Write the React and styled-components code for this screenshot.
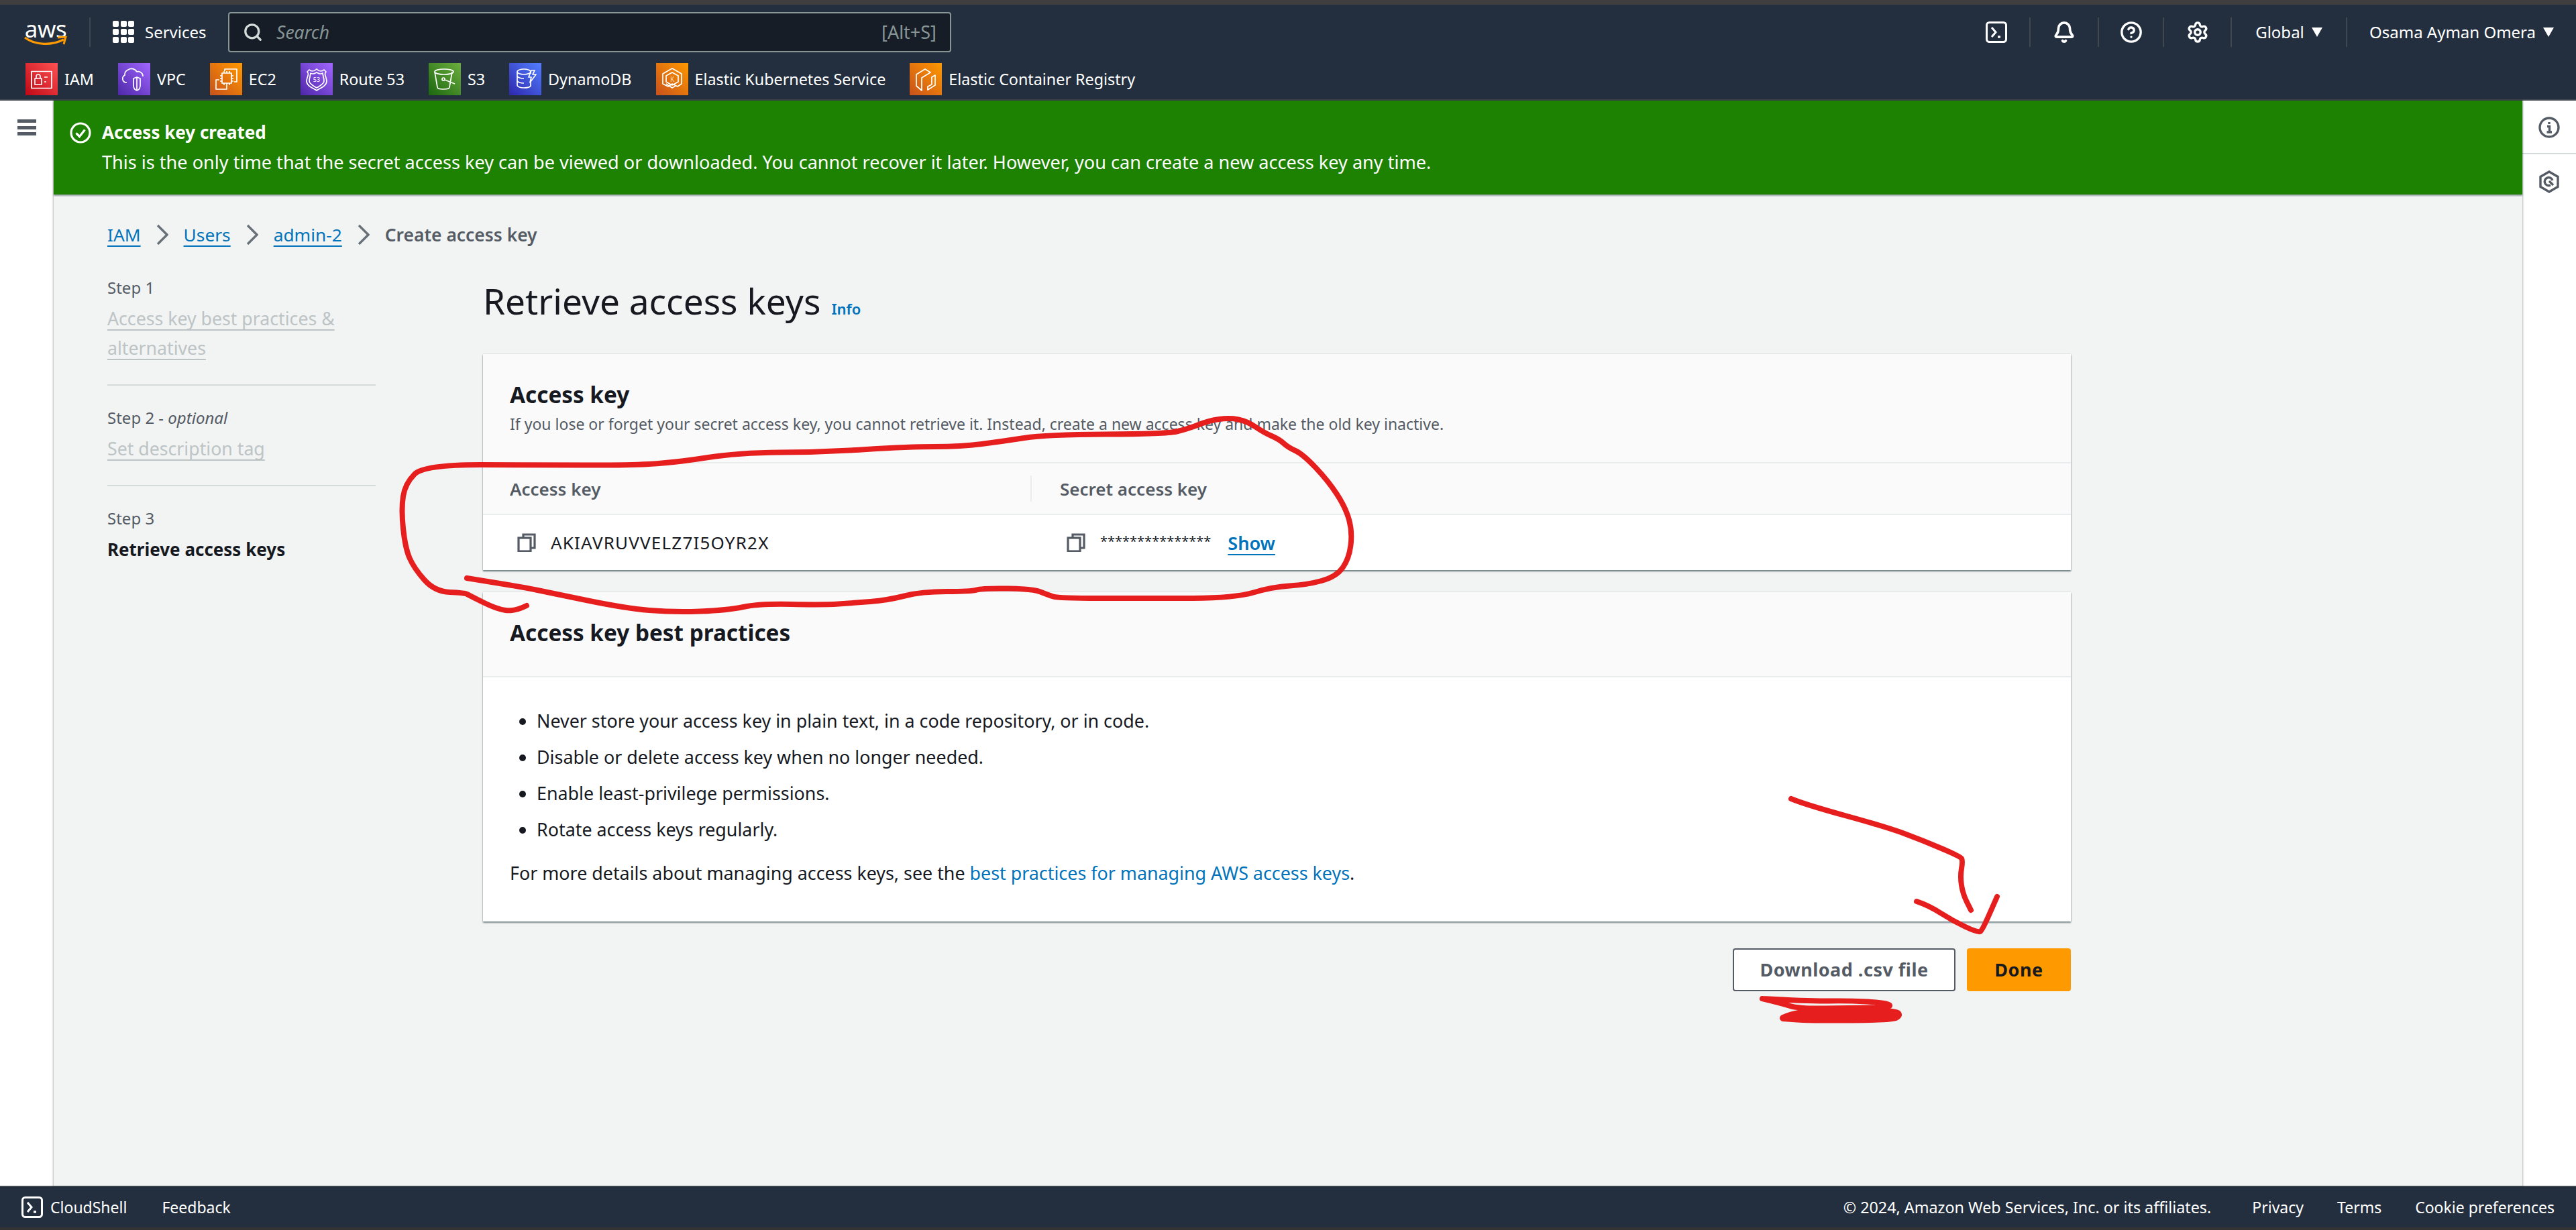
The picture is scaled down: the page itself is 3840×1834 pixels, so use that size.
import styled, { createGlobalStyle } from "styled-components";
import { Bell, CircleHelp, Search, Settings } from "lucide-react";

const GlobalStyle = createGlobalStyle`
  html, body {
    margin: 0;
    padding: 0;
    height: 100%;
    overflow: hidden;
    font-family: "Noto Sans", "Open Sans", sans-serif;
    font-size: 26.85px;
    color: #16191f;
  }
  * { box-sizing: border-box; }
`;

const favorites = [
  { name: "IAM", kind: "iam" },
  { name: "VPC", kind: "vpc" },
  { name: "EC2", kind: "ec2" },
  { name: "Route 53", kind: "route" },
  { name: "S3", kind: "s3" },
  { name: "DynamoDB", kind: "dynamo" },
  { name: "Elastic Kubernetes Service", kind: "eks" },
  { name: "Elastic Container Registry", kind: "ecr" },
];

const gradients = {
  iam: ["#bd0816", "#ff5252"],
  vpc: ["#4d27a8", "#a166ff"],
  ec2: ["#c8511b", "#ff9900"],
  route: ["#4d27a8", "#a166ff"],
  s3: ["#1b660f", "#6cae3e"],
  dynamo: ["#2e27ad", "#527fff"],
  eks: ["#c8511b", "#ff9900"],
  ecr: ["#c8511b", "#ff9900"],
};

function ServiceGlyph({ kind }) {
  if (kind === "iam") {
    return (
      <>
        <rect x="9" y="12.5" width="30" height="25" />
        <rect x="14" y="23" width="10" height="9" />
        <path d="M16 23v-3a3 3 0 0 1 6 0v3M28 21h5M28 28h3" />
      </>
    );
  }
  if (kind === "vpc") {
    return (
      <>
        <path d="M13 29h-2a6 6 0 0 1-1-11 8 8 0 0 1 5-8 9 9 0 0 1 13 3 7 7 0 0 1 9 7" />
        <path d="M28 21l-5 2v10c0 4 2 7 5 8 3-1 5-4 5-8V23zM28 21v20" />
      </>
    );
  }
  if (kind === "ec2") {
    return (
      <>
        <path d="M22 12V9h18v19h-4M14 25H9v14h16v-6" />
        <rect x="18" y="15" width="14" height="15" />
        <path d="M21 15v-3M25 15v-3M29 15v-3M21 33v-3M25 33v-3M29 33v-3M15 19h3M15 23h3M15 27h3M32 19h3M32 23h3M32 27h3" />
      </>
    );
  }
  if (kind === "route") {
    return (
      <>
        <path d="M24 9c2 2 4 3 6 3 2 0 4-1 5-2l3 3c-1 1-2 3-1 6 1 3 2 5 2 8 0 7-9 10-15 14C18 37 9 34 9 27c0-3 1-5 2-8 1-3 0-5-1-6l3-3c1 1 3 2 5 2 2 0 4-1 6-3z" />
        <path d="M24 14c2 1 3 2 5 2 1 0 3 0 4-1 0 2 1 4 1 6 1 2 1 4 1 6 0 4-6 7-11 10-5-3-11-6-11-10 0-2 0-4 1-6 0-2 1-4 1-6 1 1 3 1 4 1 2 0 3-1 5-2z" />
        <text x="24" y="28" textAnchor="middle" fontSize="9" fill="#fff" stroke="none">53</text>
      </>
    );
  }
  if (kind === "s3") {
    return (
      <>
        <ellipse cx="23" cy="13" rx="14" ry="4" />
        <path d="M9 13l4 23c0 2 4 3 9 3s9-1 9-3l4-23" />
        <circle cx="22" cy="24" r="2" />
        <path d="M24 25l15 6" />
      </>
    );
  }
  if (kind === "dynamo") {
    return (
      <>
        <ellipse cx="22" cy="13" rx="10" ry="4" />
        <path d="M12 13v6c0 2 4 4 10 4M12 19v7c0 2 4 4 10 4M12 26v7c0 2 4 4 10 4 5 0 9-1 10-3V25M32 13v3" />
        <path d="M33 11l-4 10h4l-2 8 9-12h-5l3-6z" />
      </>
    );
  }
  if (kind === "eks") {
    return (
      <>
        <path d="M24 8l14 8v15l-6 4-8-4-6 4-8-4V16z" />
        <path d="M24 14l9 5v9l-9 5-9-5v-9zM15 31l9 6 5-3" />
        <text x="24" y="28" textAnchor="middle" fontSize="10" fill="#ffd9b0" stroke="none">K</text>
      </>
    );
  }
  return (
    <>
      <path d="M10 17l13-8 8 5-13 8v19l-8-7zM18 22v19" />
      <path d="M27 40l11-7V18l-5 3v11l-6 3z" />
    </>
  );
}

function ServiceIcon({ kind }) {
  const [from, to] = gradients[kind];
  return (
    <svg width="48" height="48" viewBox="0 0 48 48">
      <defs>
        <linearGradient id={`g-${kind}`} x1="0" y1="1" x2="1" y2="0">
          <stop offset="0" stopColor={from} />
          <stop offset="1" stopColor={to} />
        </linearGradient>
      </defs>
      <rect width="48" height="48" fill={`url(#g-${kind})`} />
      <g fill="none" stroke="#fff" strokeWidth="1.7" strokeLinejoin="round">
        <ServiceGlyph kind={kind} />
      </g>
    </svg>
  );
}

function TerminalIcon({ size = 32 }) {
  return (
    <svg width={size} height={size} viewBox="0 0 32 32" fill="none" stroke="#fff" strokeWidth="3">
      <rect x="1.5" y="1.5" width="29" height="29" rx="4" />
      <path d="M9 9l6 7-6 7" />
      <path d="M18 23h4" strokeWidth="3.4" />
    </svg>
  );
}

function CopyIcon() {
  return (
    <svg width="28" height="28" viewBox="0 0 28 28" fill="none" stroke="#545b64" strokeWidth="3.2">
      <path d="M9 6V2h17v20h-6" />
      <rect x="2" y="7" width="18" height="20" />
    </svg>
  );
}

function CrumbChevron() {
  return (
    <svg width="18" height="30" viewBox="0 0 18 30" fill="none" stroke="#687078" strokeWidth="3.4">
      <path d="M2 1l14 14L2 29" />
    </svg>
  );
}

// joins the traced points with soft curves, like a marker stroke
function smooth(points) {
  let d = `M${points[0][0]} ${points[0][1]}`;
  for (let i = 1; i < points.length - 1; i++) {
    const mx = (points[i][0] + points[i + 1][0]) / 2;
    const my = (points[i][1] + points[i + 1][1]) / 2;
    d += ` Q${points[i][0]} ${points[i][1]} ${mx} ${my}`;
  }
  const last = points[points.length - 1];
  return `${d} L${last[0]} ${last[1]}`;
}

const loop = [
  [785, 903], [767, 912], [740, 908], [700, 888], [693, 884], [648, 882], [617, 847], [604, 817], [598, 759], [604, 721],
  [632, 693], [800, 693], [929, 694], [1005, 690], [1100, 675], [1228, 674], [1355, 666], [1432, 666], [1495, 658],
  [1559, 648], [1738, 647], [1770, 640], [1802, 627], [1833, 623], [1859, 628], [1884, 645], [1907, 655], [1920, 667],
  [1942, 677], [1980, 717], [2006, 757], [2016, 793], [2011, 833], [1992, 860], [1948, 872], [1897, 875], [1840, 892],
  [1700, 892], [1578, 892], [1562, 887], [1540, 878], [1464, 877], [1448, 882], [1374, 882], [1323, 895], [1272, 899],
  [1228, 902], [1132, 900], [1084, 910], [1004, 913], [932, 907], [816, 883], [782, 876], [696, 862],
];

const arrowLine = [
  [2670, 1191], [2692, 1200], [2812, 1233], [2866, 1253], [2922, 1277], [2926, 1283], [2922, 1307], [2926, 1333], [2938, 1357],
];

const arrowHead = [
  [2857, 1344], [2875, 1350], [2911, 1373], [2949, 1391], [2955, 1387], [2977, 1337],
];

const scribble = [
  [2627, 1489], [2700, 1493], [2754, 1492], [2812, 1495], [2821, 1502], [2760, 1503], [2681, 1504], [2656, 1496], [2627, 1489],
];

const scribbleFill = [
  [2658, 1518], [2680, 1508], [2760, 1507], [2826, 1508], [2832, 1514], [2820, 1520], [2700, 1521], [2658, 1518],
];

function App() {
  return (
    <>
      <GlobalStyle />
      <Page>
        <TopStrip />
        <Nav>
          <NavRow>
            <Logo>
              <LogoText>aws</LogoText>
              <svg width="64" height="16" viewBox="0 0 64 16">
                <path d="M1 2c16 12 40 12 58 3" fill="none" stroke="#ff9900" strokeWidth="3.4" />
                <path d="M50 2l12-1-3 11" fill="none" stroke="#ff9900" strokeWidth="3" />
              </svg>
            </Logo>
            <NavDivider />
            <ServicesButton>
              <GridDots>
                {Array.from({ length: 9 }, (_, i) => (
                  <span key={i} />
                ))}
              </GridDots>
              Services
            </ServicesButton>
            <SearchBox>
              <Search size={30} color="#d5dbdb" strokeWidth={2.6} />
              <SearchHint>Search</SearchHint>
              <SearchKeys>[Alt+S]</SearchKeys>
            </SearchBox>
            <NavRight>
              <NavIcon $width={101}>
                <TerminalIcon />
              </NavIcon>
              <NavIcon $width={102}>
                <Bell size={34} color="#fff" strokeWidth={2.6} />
              </NavIcon>
              <NavIcon $width={97}>
                <CircleHelp size={34} color="#fff" strokeWidth={2.4} />
              </NavIcon>
              <NavIcon $width={101}>
                <Settings size={34} color="#fff" strokeWidth={2.4} />
              </NavIcon>
              <NavMenu $width={172}>
                Global <Caret />
              </NavMenu>
              <NavMenu $width={341} $last>
                Osama Ayman Omera <Caret />
              </NavMenu>
            </NavRight>
          </NavRow>
          <FavoritesRow>
            {favorites.map((item) => (
              <Favorite key={item.kind}>
                <ServiceIcon kind={item.kind} />
                {item.name}
              </Favorite>
            ))}
          </FavoritesRow>
        </Nav>

        <Body>
          <LeftRail>
            <Hamburger>
              <span />
              <span />
              <span />
            </Hamburger>
          </LeftRail>

          <Main>
            <Flash>
              <svg width="32" height="32" viewBox="0 0 32 32" fill="none" stroke="#fff" strokeWidth="3.2">
                <circle cx="16" cy="16" r="14" />
                <path d="M9.5 16.5l5 5 8-10" />
              </svg>
              <FlashText>
                <FlashTitle>Access key created</FlashTitle>
                This is the only time that the secret access key can be viewed or downloaded. You cannot recover it
                later. However, you can create a new access key any time.
              </FlashText>
            </Flash>

            <Content>
              <Breadcrumbs>
                <CrumbLink>IAM</CrumbLink>
                <CrumbChevron />
                <CrumbLink>Users</CrumbLink>
                <CrumbChevron />
                <CrumbLink>admin-2</CrumbLink>
                <CrumbChevron />
                <CrumbCurrent>Create access key</CrumbCurrent>
              </Breadcrumbs>

              <Columns>
                <Steps>
                  <Step>
                    <StepLabel>Step 1</StepLabel>
                    <StepLink>
                      <u>Access key best practices &amp;</u>
                      <br />
                      <u>alternatives</u>
                    </StepLink>
                  </Step>
                  <Step>
                    <StepLabel>
                      Step 2 - <em>optional</em>
                    </StepLabel>
                    <StepLink>
                      <u>Set description tag</u>
                    </StepLink>
                  </Step>
                  <Step>
                    <StepLabel>Step 3</StepLabel>
                    <StepCurrent>Retrieve access keys</StepCurrent>
                  </Step>
                </Steps>

                <Wizard>
                  <PageTitle>
                    <h1>Retrieve access keys</h1>
                    <InfoLink>Info</InfoLink>
                  </PageTitle>

                  <Card>
                    <CardHeader $height={163}>
                      <CardTitle>Access key</CardTitle>
                      <CardDescription>
                        If you lose or forget your secret access key, you cannot retrieve it. Instead, create a new
                        access key and make the old key inactive.
                      </CardDescription>
                    </CardHeader>
                    <KeyTable>
                      <KeyHead>Access key</KeyHead>
                      <KeyHead $divided>Secret access key</KeyHead>
                      <KeyCell>
                        <CopyIcon />
                        <AccessKeyId>AKIAVRUVVELZ7I5OYR2X</AccessKeyId>
                      </KeyCell>
                      <KeyCell $second>
                        <CopyIcon />
                        <Stars>***************</Stars>
                        <ShowLink>Show</ShowLink>
                      </KeyCell>
                    </KeyTable>
                  </Card>

                  <Card $gap>
                    <CardHeader $height={127}>
                      <CardTitle>Access key best practices</CardTitle>
                    </CardHeader>
                    <PracticesBody>
                      <Practices>
                        <li>Never store your access key in plain text, in a code repository, or in code.</li>
                        <li>Disable or delete access key when no longer needed.</li>
                        <li>Enable least-privilege permissions.</li>
                        <li>Rotate access keys regularly.</li>
                      </Practices>
                      <MoreDetails>
                        For more details about managing access keys, see the{" "}
                        <a>best practices for managing AWS access keys</a>.
                      </MoreDetails>
                    </PracticesBody>
                  </Card>

                  <Actions>
                    <SecondaryButton>Download .csv file</SecondaryButton>
                    <PrimaryButton>Done</PrimaryButton>
                  </Actions>
                </Wizard>
              </Columns>
            </Content>
          </Main>

          <RightRail>
            <RailButton>
              <svg width="32" height="32" viewBox="0 0 32 32" fill="none" stroke="#545b64" strokeWidth="3.4">
                <circle cx="16" cy="16" r="14" />
                <path d="M16 8v3M13 14.5h3.5v8M12.5 23h7.5" />
              </svg>
            </RailButton>
            <RailButton $last>
              <svg width="32" height="34" viewBox="0 0 32 34" fill="none" stroke="#545b64" strokeWidth="3.4">
                <path d="M16 2l13 7.5v15L16 32 3 24.500V9.500z" />
                <path d="M21 15a6 6 0 1 0-3 7" />
                <path d="M16 16l6 6" />
              </svg>
            </RailButton>
          </RightRail>
        </Body>

        <Footer>
          <FooterLeft>
            <TerminalIcon />
            <span>CloudShell</span>
            <FeedbackLabel>Feedback</FeedbackLabel>
          </FooterLeft>
          <FooterRight>
            <Copyright>© 2024, Amazon Web Services, Inc. or its affiliates.</Copyright>
            <span>Privacy</span>
            <span>Terms</span>
            <span>Cookie preferences</span>
          </FooterRight>
        </Footer>
        <BottomStrip />

        <Annotations viewBox="0 0 3840 1834" fill="none" stroke="#e61e1e" strokeWidth="8" strokeLinecap="round" strokeLinejoin="round">
          <path d={smooth(loop)} />
          <path d={smooth(arrowLine)} />
          <path d={smooth(arrowHead)} />
          <path d={smooth(scribble)} />
          <path d={smooth(scribbleFill)} fill="#e61e1e" strokeWidth="10" />
        </Annotations>
      </Page>
    </>
  );
}

export default App;

const Page = styled.div`
  position: relative;
  height: 100vh;
  display: flex;
  flex-direction: column;
  overflow: hidden;
  background: #fff;
`;

const TopStrip = styled.div`
  height: 7px;
  background: #3f3f3f;
`;

const Nav = styled.header`
  height: 143px;
  background: #232f3e;
  border-bottom: 2px solid #414750;
  color: #fff;
`;

const NavRow = styled.div`
  height: 87px;
  display: flex;
  align-items: center;
  padding: 0 0 6px 36px;
`;

const Logo = styled.div`
  width: 64px;
  height: 44px;
  display: flex;
  flex-direction: column;
  align-items: center;
  svg {
    margin-top: -6px;
  }
`;

const LogoText = styled.span`
  font-size: 35px;
  line-height: 34px;
  letter-spacing: -0.5px;
`;

const NavDivider = styled.div`
  width: 2px;
  height: 44px;
  margin-left: 33px;
  background: #414750;
`;

const ServicesButton = styled.div`
  display: flex;
  align-items: center;
  gap: 16px;
  margin-left: 33px;
  font-size: 24px;
  width: 172px;
`;

const GridDots = styled.div`
  display: grid;
  grid-template-columns: repeat(3, 9px);
  grid-auto-rows: 9px;
  gap: 3px 2.5px;
  span {
    background: #fff;
    border-radius: 2px;
  }
`;

const SearchBox = styled.div`
  width: 1078px;
  height: 60px;
  display: flex;
  align-items: center;
  padding: 0 20px 0 20px;
  background: #161d26;
  border: 2px solid #879596;
  border-radius: 4px;
`;

const SearchHint = styled.span`
  margin-left: 20px;
  color: #879596;
  font-size: 26.5px;
  font-style: italic;
`;

const SearchKeys = styled.span`
  margin-left: auto;
  color: #879596;
  font-size: 27px;
`;

const NavRight = styled.div`
  margin-left: auto;
  display: flex;
  align-items: center;
  height: 44px;
`;

const NavIcon = styled.div`
  width: ${(p) => p.$width}px;
  height: 44px;
  display: flex;
  align-items: center;
  justify-content: center;
  border-right: 2px solid #414750;
`;

const NavMenu = styled.div`
  width: ${(p) => p.$width}px;
  height: 44px;
  display: flex;
  align-items: center;
  justify-content: center;
  gap: 11px;
  font-size: 24px;
  border-right: ${(p) => (p.$last ? "none" : "2px solid #414750")};
  white-space: nowrap;
`;

const Caret = styled.i`
  width: 0;
  height: 0;
  border-left: 8px solid transparent;
  border-right: 8px solid transparent;
  border-top: 14px solid #fff;
`;

const FavoritesRow = styled.div`
  display: flex;
  align-items: center;
  gap: 36px;
  padding-left: 38px;
`;

const Favorite = styled.div`
  display: flex;
  align-items: center;
  gap: 10px;
  font-size: 23.3px;
  white-space: nowrap;
`;

const Body = styled.div`
  flex: 1;
  min-height: 0;
  display: flex;
`;

const LeftRail = styled.aside`
  width: 80px;
  background: #fff;
`;

const Hamburger = styled.div`
  margin: 28px 0 0 26px;
  width: 28px;
  height: 24px;
  display: flex;
  flex-direction: column;
  justify-content: space-between;
  span {
    height: 5px;
    background: #545b64;
  }
`;

const Main = styled.main`
  flex: 1;
  min-width: 0;
  background: #f2f3f3;
  box-shadow: 0 0 2px 1px rgba(0, 28, 36, 0.3);
  position: relative;
`;

const Flash = styled.div`
  height: 140px;
  display: flex;
  align-items: flex-start;
  gap: 16px;
  padding: 32px 24px;
  background: #1d8102;
  color: #fff;
  box-shadow: 0 2px 2px rgba(0, 28, 36, 0.4);
`;

const FlashText = styled.div`
  font-size: 27.1px;
  line-height: 40px;
  margin-top: -4px;
`;

const FlashTitle = styled.div`
  font-size: 26px;
  font-weight: 700;
  line-height: 38px;
  margin-bottom: 6px;
`;

const Content = styled.div`
  padding: 43px 0 0 80px;
`;

const Breadcrumbs = styled.nav`
  display: flex;
  align-items: center;
  gap: 23px;
  height: 34px;
  font-size: 26.3px;
`;

const CrumbLink = styled.a`
  color: #0073bb;
  text-decoration: underline;
  text-underline-offset: 6px;
`;

const CrumbCurrent = styled.span`
  color: #545b64;
  font-size: 26.4px;
  font-weight: 600;
`;

const Columns = styled.div`
  display: flex;
  gap: 160px;
  margin-top: 46px;
`;

const Steps = styled.ol`
  list-style: none;
  width: 400px;
  margin: -1px 0 0;
  padding: 0;
`;

const Step = styled.li`
  padding: 31px 0 32px;
  border-bottom: 2px solid #d5dbdb;
  &:first-child {
    padding-top: 0;
  }
  &:last-child {
    border-bottom: none;
  }
`;

const StepLabel = styled.div`
  color: #545b64;
  font-size: 24px;
  line-height: 34px;
  margin-bottom: 7px;
`;

const StepLink = styled.div`
  color: #bcc4c5;
  font-size: 26.7px;
  line-height: 44px;
  u {
    text-decoration-thickness: 2px;
    text-underline-offset: 6px;
  }
`;

const StepCurrent = styled.div`
  font-size: 26px;
  font-weight: 700;
  line-height: 44px;
`;

const Wizard = styled.div`
  width: 2367px;
`;

const PageTitle = styled.div`
  display: flex;
  align-items: flex-end;
  gap: 16px;
  height: 72px;
  margin-bottom: 43px;
  h1 {
    margin: 0;
    font-size: 53.2px;
    font-weight: 400;
    line-height: 72px;
  }
`;

const InfoLink = styled.a`
  color: #0073bb;
  font-size: 22px;
  font-weight: 600;
  line-height: 34px;
  margin-bottom: 8px;
`;

const Card = styled.section`
  background: #fff;
  margin-top: ${(p) => (p.$gap ? "33px" : 0)};
  box-shadow: 0 2px 2px rgba(0, 28, 36, 0.5), 0 0 2px rgba(0, 28, 36, 0.2);
`;

const CardHeader = styled.div`
  height: ${(p) => p.$height}px;
  padding: 38px 40px 0;
  background: #fafafa;
  border-bottom: 2px solid #eaeded;
`;

const CardTitle = styled.h2`
  margin: 0;
  font-size: 33.3px;
  font-weight: 700;
  line-height: 44px;
`;

const CardDescription = styled.p`
  margin: 7px 0 0;
  color: #545b64;
  font-size: 23px;
  line-height: 30px;
`;

const KeyTable = styled.div`
  display: grid;
  grid-template-columns: 816px 1fr;
  grid-template-rows: 77px 82px;
`;

const KeyHead = styled.div`
  position: relative;
  display: flex;
  align-items: center;
  padding-left: ${(p) => (p.$divided ? "44px" : "40px")};
  background: #fafafa;
  color: #545b64;
  font-size: 26px;
  font-weight: 600;
  border-bottom: 2px solid #eaeded;
  &::before {
    content: "";
    display: ${(p) => (p.$divided ? "block" : "none")};
    position: absolute;
    left: 0;
    top: 18px;
    bottom: 18px;
    width: 2px;
    background: #eaeded;
  }
`;

const KeyCell = styled.div`
  display: flex;
  align-items: center;
  gap: 22px;
  padding-left: ${(p) => (p.$second ? "54px" : "51px")};
`;

const AccessKeyId = styled.span`
  font-size: 26px;
  letter-spacing: 1.2px;
`;

const Stars = styled.span`
  margin-top: -6px;
  font-size: 20px;
`;

const ShowLink = styled.a`
  margin-left: 3px;
  color: #0073bb;
  font-size: 27px;
  font-weight: 600;
  text-decoration: underline;
  text-underline-offset: 6px;
`;

const PracticesBody = styled.div`
  height: 364px;
  padding: 38px 40px 0;
`;

const Practices = styled.ul`
  margin: 0;
  padding: 0 0 0 40px;
  line-height: 54px;
`;

const MoreDetails = styled.p`
  margin: 11px 0 0;
  line-height: 54px;
  a {
    color: #0073bb;
  }
`;

const Actions = styled.div`
  display: flex;
  justify-content: flex-end;
  gap: 17px;
  margin-top: 40px;
`;

const SecondaryButton = styled.button`
  width: 332px;
  height: 64px;
  padding-bottom: 3px;
  background: #fff;
  border: 2px solid #545b64;
  border-radius: 4px;
  color: #545b64;
  font: 700 27px "Noto Sans", sans-serif;
  letter-spacing: 0.5px;
`;

const PrimaryButton = styled.button`
  width: 155px;
  height: 64px;
  padding-bottom: 3px;
  background: #ff9900;
  border: none;
  border-radius: 4px;
  color: #16191f;
  font: 700 27px "Noto Sans", sans-serif;
  letter-spacing: 0.5px;
`;

const RightRail = styled.aside`
  width: 80px;
  background: #fff;
`;

const RailButton = styled.div`
  height: ${(p) => (p.$last ? "auto" : "80px")};
  padding: 24px 0 0 24px;
  border-bottom: ${(p) => (p.$last ? "none" : "2px solid #d5dbdb")};
`;

const Footer = styled.footer`
  height: 62px;
  display: flex;
  align-items: center;
  justify-content: space-between;
  padding: 0 32px;
  background: #232f3e;
  border-top: 2px solid #414750;
  color: #fff;
  font-size: 23px;
`;

const FooterLeft = styled.div`
  display: flex;
  align-items: center;
  gap: 11px;
`;

const FeedbackLabel = styled.span`
  margin-left: 41px;
`;

const FooterRight = styled.div`
  display: flex;
  gap: 50px;
`;

const Copyright = styled.span`
  margin-right: 11px;
  font-size: 23.3px;
`;

const BottomStrip = styled.div`
  height: 4px;
  background: #333;
`;

const Annotations = styled.svg`
  position: absolute;
  top: 0;
  left: 0;
  width: 3840px;
  height: 1834px;
  pointer-events: none;
`;
